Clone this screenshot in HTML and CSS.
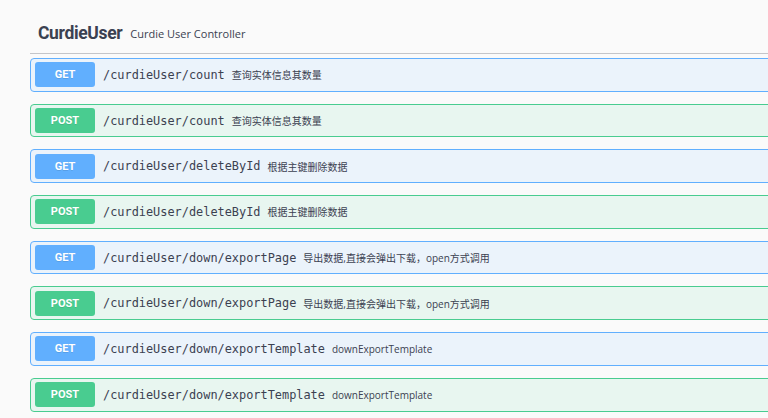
FILE: index.html
```html
<!DOCTYPE html>
<html>
<head>
<meta charset="utf-8">
<link rel="stylesheet" href="styles.css">
</head>
<body>
<div class="wrap">
  <div class="tag-header">
    <span class="tag-name">CurdieUser</span>
    <span class="tag-desc">Curdie User Controller</span>
  </div>
  <div class="ops">
    <div class="op get"><span class="method">GET</span><span class="path">/curdieUser/count</span><span class="desc">查询实体信息其数量</span></div>
    <div class="op post"><span class="method">POST</span><span class="path">/curdieUser/count</span><span class="desc">查询实体信息其数量</span></div>
    <div class="op get"><span class="method">GET</span><span class="path">/curdieUser/deleteById</span><span class="desc">根据主键删除数据</span></div>
    <div class="op post"><span class="method">POST</span><span class="path">/curdieUser/deleteById</span><span class="desc">根据主键删除数据</span></div>
    <div class="op get"><span class="method">GET</span><span class="path">/curdieUser/down/exportPage</span><span class="desc">导出数据,直接会弹出下载，open方式调用</span></div>
    <div class="op post"><span class="method">POST</span><span class="path">/curdieUser/down/exportPage</span><span class="desc">导出数据,直接会弹出下载，open方式调用</span></div>
    <div class="op get"><span class="method">GET</span><span class="path">/curdieUser/down/exportTemplate</span><span class="desc">downExportTemplate</span></div>
    <div class="op post"><span class="method">POST</span><span class="path">/curdieUser/down/exportTemplate</span><span class="desc">downExportTemplate</span></div>
  </div>
</div>
</body>
</html>
```
FILE: styles.css
```css
html, body {
  margin: 0;
  padding: 0;
  background: #fafafa;
  overflow: hidden;
  font-family: "Open Sans", "Noto Sans CJK SC", sans-serif;
  color: #3b4151;
}
.wrap {
  padding-left: 30px;
  width: 800px;
}
.tag-header {
  height: 41px;
  padding-top: 12px;
  padding-left: 8px;
  display: flex;
  align-items: center;
  border-bottom: 1px solid #c4c5c9;
}
.tag-name {
  font-family: Roboto, "Open Sans", sans-serif;
  font-weight: 700;
  font-size: 17.5px;
  letter-spacing: -0.35px;
  color: #3b4151;
}
.tag-desc {
  font-size: 11px;
  margin-left: 8px;
  color: #3b4151;
  padding-top: 2px;
}
.ops {
  padding-top: 4px;
}
.op {
  box-sizing: border-box;
  height: 33.7px;
  margin-bottom: 12px;
  border: 1px solid;
  border-radius: 4px;
  padding: 0 4px;
  display: flex;
  align-items: center;
}
.op.get {
  background: #ebf3fb;
  border-color: #61affe;
}
.op.post {
  background: #e8f6f0;
  border-color: #49cc90;
}
.method {
  width: 60px;
  height: 25px;
  border-radius: 3px;
  display: flex;
  align-items: center;
  justify-content: center;
  color: #fff;
  font-family: Roboto, "Open Sans", sans-serif;
  font-weight: 700;
  font-size: 11px;
  text-shadow: 0 1px 0 rgba(0,0,0,.1);
}
.get .method { background: #61affe; }
.post .method { background: #49cc90; }
.path {
  font-family: "DejaVu Sans Mono", monospace;
  font-size: 11.9px;
  color: #3b4151;
  padding: 0 7px 0 8px;
}
.desc {
  font-family: "Open Sans", "Noto Sans CJK SC", sans-serif;
  font-size: 10px;
  color: #3b4151;
}
```
